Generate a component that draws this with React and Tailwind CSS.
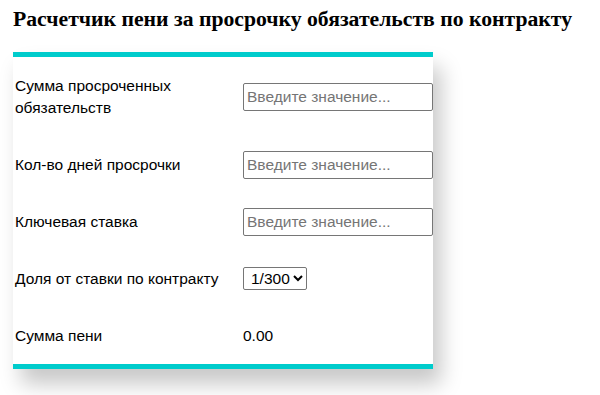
import React, { useState } from 'react';

const rows = [
  { label: 'Сумма просроченных обязательств', type: 'input', tall: true },
  { label: 'Кол-во дней просрочки', type: 'input' },
  { label: 'Ключевая ставка', type: 'input' },
  { label: 'Доля от ставки по контракту', type: 'select' },
  { label: 'Сумма пени', type: 'result' },
];

const App = () => {
  const [share, setShare] = useState('300');

  return (
    <div className="min-h-screen bg-white px-[13px] pt-[6px]">
      <h3 className="font-['Liberation_Serif',serif] text-[21.7px] font-bold leading-[26px] text-black">
        Расчетчик пени за просрочку обязательств по контракту
      </h3>

      <div className="mt-[20px] w-[420px] border-y-[5px] border-[#00cccc] bg-white shadow-[8px_15px_20px_rgba(0,0,0,0.22)] font-['Liberation_Sans',sans-serif] text-[15.5px] leading-[22px] text-black">
        {rows.map((row) => (
          <div key={row.label} className={`flex items-center ${row.tall ? 'h-[79px]' : 'h-[57px]'}`}>
            <div className="w-[230px] pl-[2px] pr-4">{row.label}</div>
            {row.type === 'input' && (
              <input
                type="text"
                placeholder="Введите значение..."
                className="h-[28px] w-[190px] rounded-[2px] border border-[#767676] px-[3px] text-[15.5px] placeholder:text-[#757575] outline-none"
              />
            )}
            {row.type === 'select' && (
              <select
                value={share}
                onChange={(e) => setShare(e.target.value)}
                className="h-[23px] rounded-[2px] border border-[#767676] pl-[3px] text-[15.5px]"
              >
                <option value="300">1/300</option>
                <option value="150">1/150</option>
              </select>
            )}
            {row.type === 'result' && <div>0.00</div>}
          </div>
        ))}
      </div>
    </div>
  );
};

export default App;
